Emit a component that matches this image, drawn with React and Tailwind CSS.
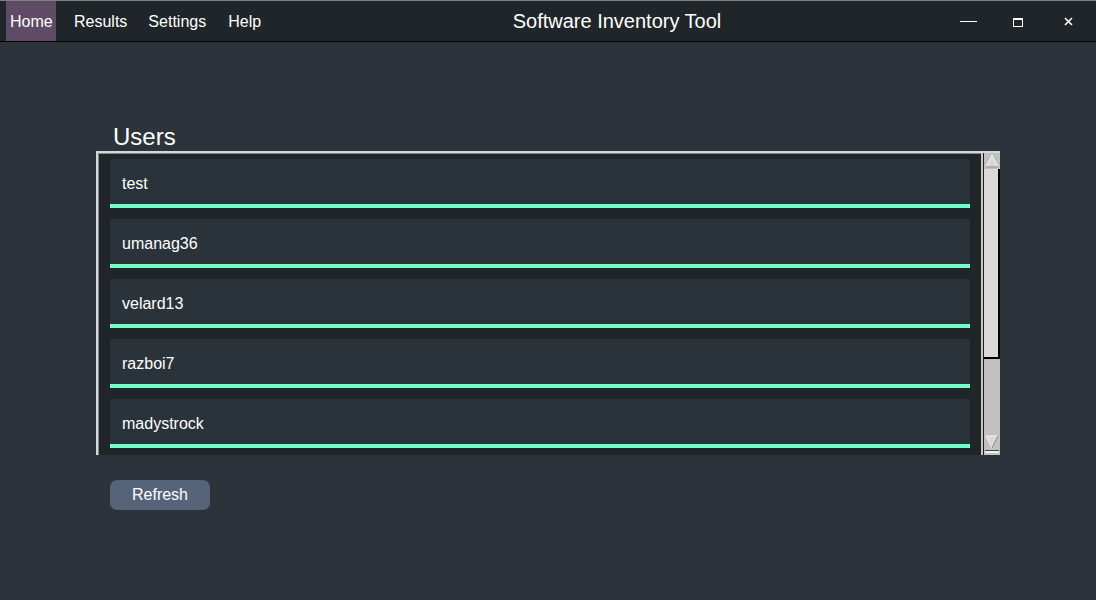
const users = ['test', 'umanag36', 'velard13', 'razboi7', 'madystrock'];

export default function App() {
  return (
    <div
      className="w-[1096px] h-[600px] bg-[#2c333a] text-white flex flex-col overflow-hidden"
      style={{ fontFamily: '"Liberation Sans", Arial, sans-serif' }}
    >
      {/* Title bar */}
      <div className="h-[42px] flex items-stretch bg-[#1f2528] border-t border-[#7d8084] border-b border-b-black relative">
        <div className="flex items-stretch pl-[6px] text-[16px]">
          <div className="bg-[#5f4b66] w-[50px] flex items-center pl-[4px] pt-[1px]">Home</div>
          <div className="flex items-center pl-[18px] pt-[1px]">Results</div>
          <div className="flex items-center pl-[21px] pt-[1px]">Settings</div>
          <div className="flex items-center pl-[22px] pt-[1px]">Help</div>
        </div>
        <div className="absolute left-0 right-0 top-0 bottom-0 flex items-center justify-center pl-[138px] pointer-events-none text-[20px]">
          Software Inventory Tool
        </div>
        <div className="ml-auto flex items-center pr-[8px]">
          <div className="w-[40px] flex justify-center">
            <div className="w-[17px] h-[1px] bg-white" />
          </div>
          <div className="w-[60px] flex justify-center pt-[2px]">
            <div className="w-[10px] h-[9px] border border-white border-t-2" />
          </div>
          <div className="w-[40px] flex justify-center">
            <svg width="9" height="9" viewBox="0 0 9 9">
              <path d="M1 1 L8 8 M8 1 L1 8" stroke="white" strokeWidth="1.6" />
            </svg>
          </div>
        </div>
      </div>

      {/* Content */}
      <div className="pl-[113px] pt-[80px] text-[24px] leading-[30px]">Users</div>
      <div className="ml-[96px] mt-[-1px] w-[904px] h-[304px] flex border-l-2 border-t-2 border-[#d6d6d6] bg-[#1f2528]">
        <div className="flex-1 border-l border-t border-[#85888b] overflow-hidden pt-[5px] pl-[11px] pr-[11px] flex flex-col gap-[11px]">
          {users.map(u => (
            <div key={u} className="shrink-0 h-[49px] bg-[#2b333a] border-b-4 border-[#73fdc9] flex items-center pl-[12px] pt-[4px] text-[16px]">
              {u}
            </div>
          ))}
        </div>
        <Scrollbar />
      </div>

      <div className="pl-[110px] pt-[25px]">
        <button className="w-[100px] h-[30px] rounded-[7px] bg-[#556479] text-[16px] text-white">Refresh</button>
      </div>
    </div>
  );
}

function Scrollbar() {
  return (
    <div className="w-[19px] h-full flex border-l-2 border-[#c8c8c8]">
      <div className="flex-1 flex flex-col bg-[#c0c0c0] border-l border-[#1a1a1a]">
        <div className="h-[16px] flex items-center justify-center">
          <svg width="14" height="14" viewBox="0 0 14 14">
            <polygon points="7,1 1,13 13,13" fill="#d8d8d8" stroke="#f5f5f5" strokeWidth="1" />
            <line x1="1" y1="13" x2="13" y2="13" stroke="#7a7a7a" />
          </svg>
        </div>
        <div className="h-[190px] bg-[#d9d9d9] border-r-2 border-b-2 border-black" />
        <div className="flex-1" />
        <div className="h-[16px] flex items-center justify-center">
          <svg width="14" height="14" viewBox="0 0 14 14">
            <polygon points="1,1 13,1 7,13" fill="#d8d8d8" stroke="#f5f5f5" strokeWidth="1" />
            <line x1="13" y1="1" x2="7" y2="13" stroke="#7a7a7a" />
          </svg>
        </div>
        <div className="h-[3px] mb-[2px] mx-[1px] bg-[#f0f0f0] border-t border-[#444]" />
      </div>
    </div>
  );
}
